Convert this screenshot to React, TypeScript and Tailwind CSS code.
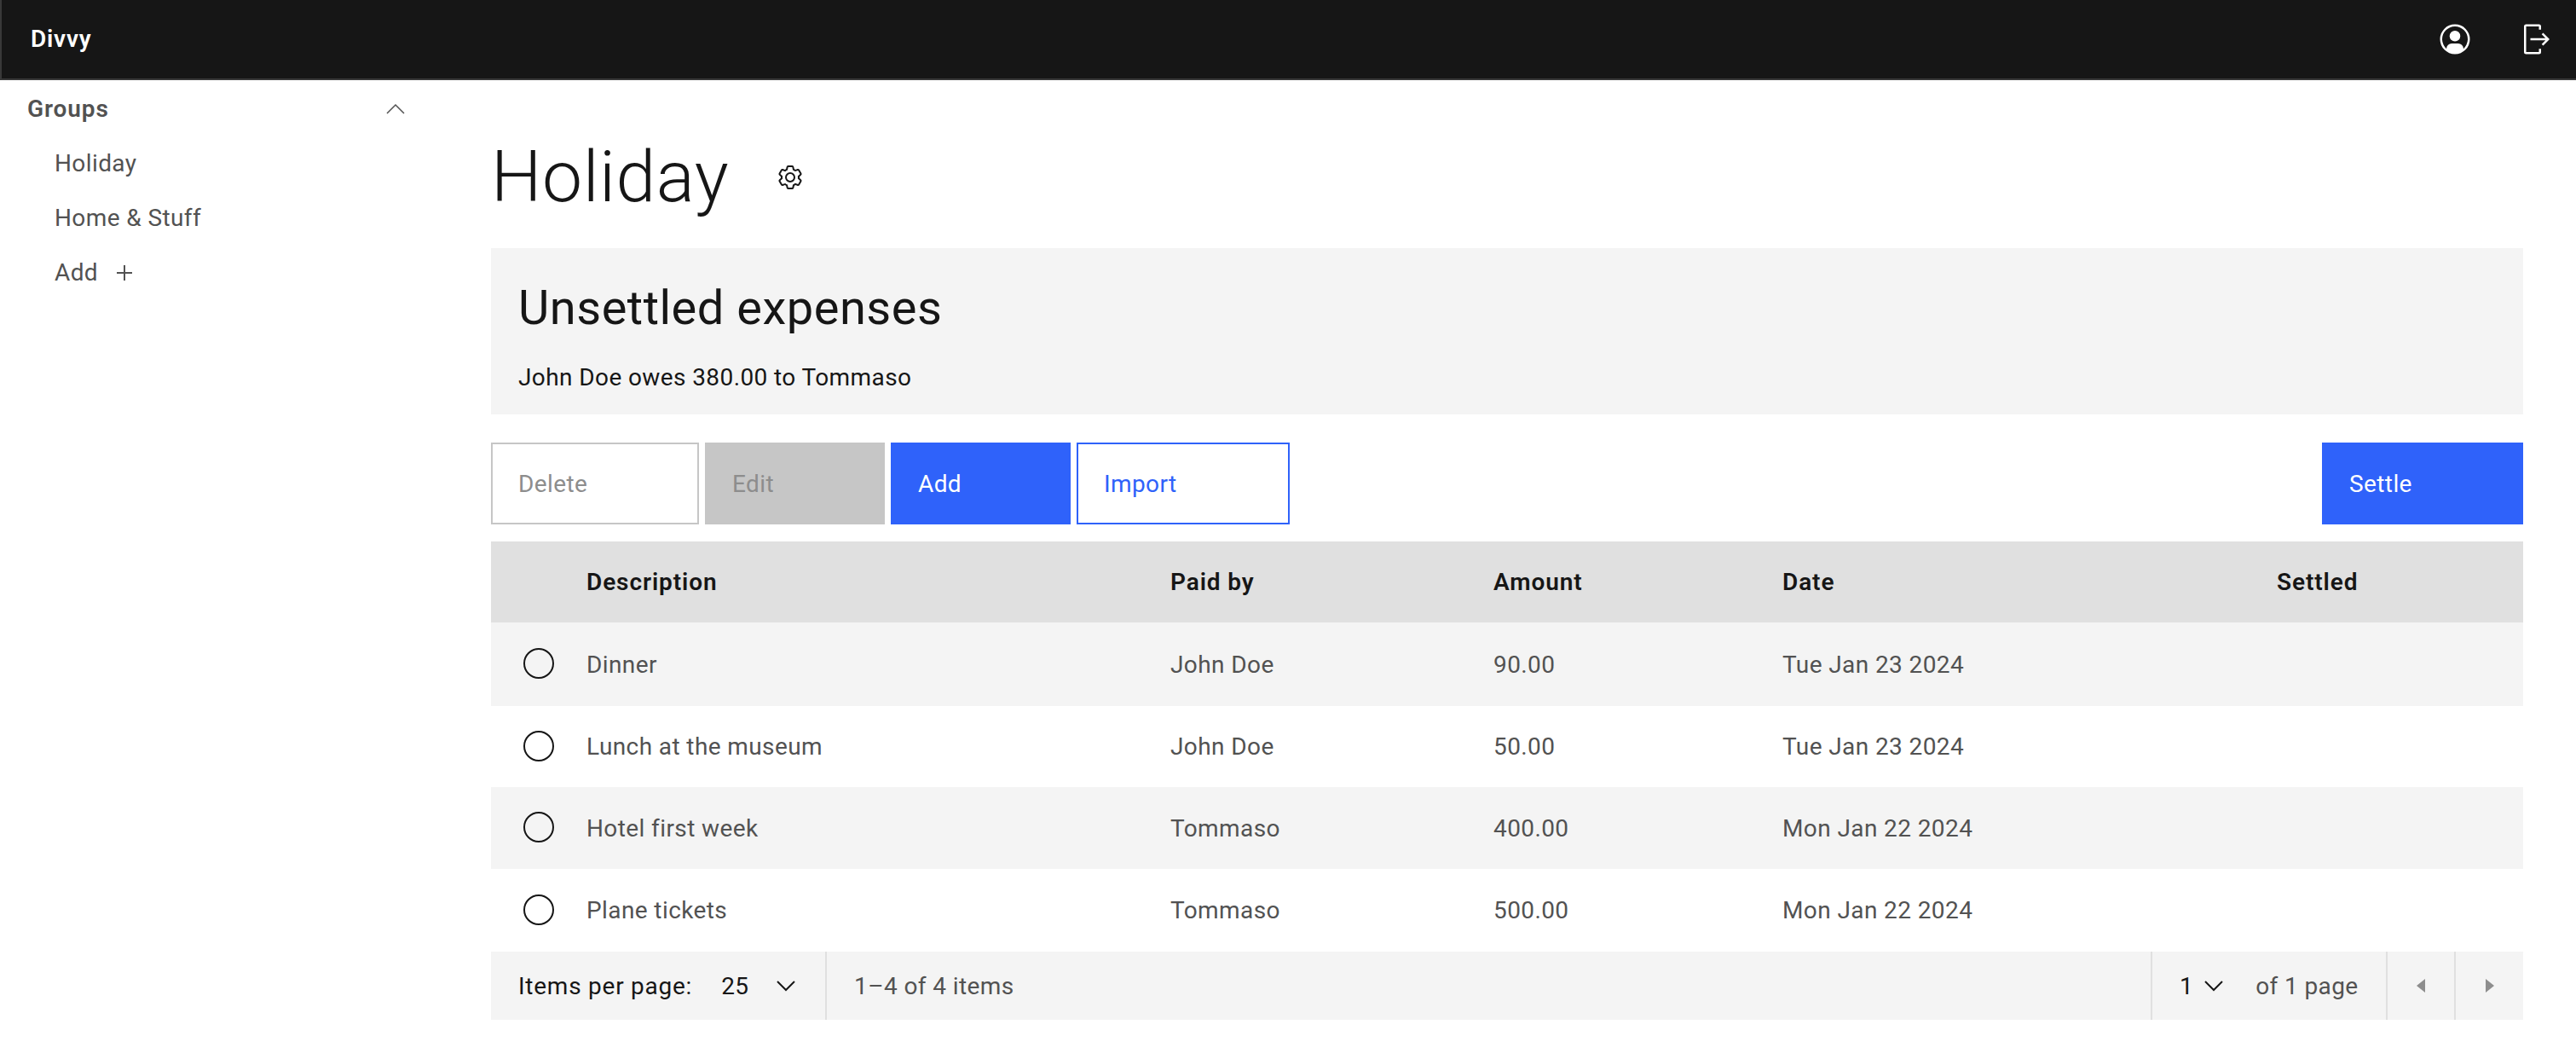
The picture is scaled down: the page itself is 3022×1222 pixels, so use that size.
const expenses = [
  { description: "Dinner", paidBy: "John Doe", amount: "90.00", date: "Tue Jan 23 2024", rowClass: "h-[98px] bg-[#f4f4f4]" },
  { description: "Lunch at the museum", paidBy: "John Doe", amount: "50.00", date: "Tue Jan 23 2024", rowClass: "h-[95px] bg-white" },
  { description: "Hotel first week", paidBy: "Tommaso", amount: "400.00", date: "Mon Jan 22 2024", rowClass: "h-[96px] bg-[#f4f4f4]" },
  { description: "Plane tickets", paidBy: "Tommaso", amount: "500.00", date: "Mon Jan 22 2024", rowClass: "h-[97px] bg-white" },
];

const columns = "grid grid-cols-[113px_684px_379px_339px_580px_1fr] items-center";
const cell = "pt-[1px]";

function UserIcon() {
  return (
    <svg width="40" height="40" viewBox="0 0 32 32" fill="#ffffff">
      <path d="M16 8a5 5 0 1 0 5 5 5 5 0 0 0-5-5z" />
      <path d="M16 2a14 14 0 1 0 14 14A14.016 14.016 0 0 0 16 2zm7.992 22.926A5.002 5.002 0 0 0 19 20h-6a5.002 5.002 0 0 0-4.992 4.926 12 12 0 1 1 15.985 0z" />
    </svg>
  );
}

function LogoutIcon() {
  return (
    <svg width="40" height="40" viewBox="0 0 32 32" fill="#ffffff">
      <path d="M6 30h12a2 2 0 002-2v-3h-2v3H6V4h12v3h2V4a2 2 0 00-2-2H6a2 2 0 00-2 2v24a2 2 0 002 2z" />
      <path d="M20.586 20.586L24.172 17H10v-2h14.172l-3.586-3.586L22 10l6 6-6 6-1.414-1.414z" />
    </svg>
  );
}

function SettingsIcon() {
  return (
    <svg width="32" height="32" viewBox="0 0 32 32" fill="#161616">
      <path d="M27 16.76c0-.25 0-.5 0-.76s0-.51 0-.77l1.92-1.68A2 2 0 0 0 29.3 11L26.94 7a2 2 0 0 0-1.73-1 2 2 0 0 0-.64.1l-2.43.82a11.35 11.35 0 0 0-1.31-.75l-.51-2.52a2 2 0 0 0-2-1.61h-4.68a2 2 0 0 0-2 1.61l-.51 2.52a11.48 11.48 0 0 0-1.32.75l-2.38-.86A2 2 0 0 0 6.79 6a2 2 0 0 0-1.73 1L2.7 11a2 2 0 0 0 .41 2.51L5 15.24c0 .25 0 .5 0 .76s0 .51 0 .77l-1.92 1.68A2 2 0 0 0 2.7 21l2.36 4a2 2 0 0 0 1.73 1 2 2 0 0 0 .64-.1l2.43-.82a11.35 11.35 0 0 0 1.31.75l.51 2.52a2 2 0 0 0 2 1.61h4.72a2 2 0 0 0 2-1.61l.51-2.52a11.48 11.48 0 0 0 1.32-.75l2.42.82a2 2 0 0 0 .64.1 2 2 0 0 0 1.73-1l2.28-4a2 2 0 0 0-.41-2.51ZM25.21 24l-3.43-1.16a8.86 8.86 0 0 1-2.71 1.57L18.36 28h-4.72l-.71-3.55a9.36 9.36 0 0 1-2.7-1.57L6.79 24l-2.36-4 2.72-2.4a8.9 8.9 0 0 1 0-3.13L4.43 12l2.36-4 3.43 1.16a8.86 8.86 0 0 1 2.71-1.57L13.64 4h4.72l.71 3.55a9.36 9.36 0 0 1 2.7 1.57L25.21 8l2.36 4-2.72 2.4a8.9 8.9 0 0 1 0 3.13L27.57 20Z" />
      <path d="M16 22a6 6 0 1 1 6-6 5.94 5.94 0 0 1-6 6Zm0-10a3.91 3.91 0 0 0-4 4 3.91 3.91 0 0 0 4 4 3.91 3.91 0 0 0 4-4 3.91 3.91 0 0 0-4-4Z" />
    </svg>
  );
}

function Chevron({ up = false, color = "#161616" }: { up?: boolean; color?: string }) {
  return (
    <svg width="22" height="13" viewBox="0 0 22 13" fill="none" stroke={color} strokeWidth={up ? 1.5 : 2}>
      <path d={up ? "M1 12 11 2l10 10" : "M1 1l10 10L21 1"} />
    </svg>
  );
}

export default function App() {
  return (
    <div className="h-[1222px] overflow-hidden bg-white font-['Roboto',sans-serif] text-[28px] leading-[36px] tracking-[0.4px] text-[#525252]">
      <header className="flex h-[94px] items-center border-b-2 border-l-2 border-[#393939] bg-[#161616] pr-[26px] pl-[34px]">
        <span className="font-semibold tracking-[0.8px] text-white">Divvy</span>
        <div className="ml-auto flex items-center gap-[56px]">
          <UserIcon />
          <LogoutIcon />
        </div>
      </header>

      <div className="flex">
        <aside className="w-[512px] shrink-0">
          <div className="flex h-[66px] items-center pr-[37px] pl-[32px]">
            <span className="pt-[2px] font-semibold tracking-[0.9px]">Groups</span>
            <span className="ml-auto"><Chevron up color="#525252" /></span>
          </div>
          <nav className="flex flex-col pl-[64px]">
            <a className="flex h-[64px] items-center">Holiday</a>
            <a className="flex h-[64px] items-center">Home &amp; Stuff</a>
            <a className="flex h-[64px] items-center gap-[22px]">
              Add
              <svg width="18" height="18" viewBox="0 0 18 18" stroke="#525252" strokeWidth="2"><path d="M9 0v18M0 9h18" /></svg>
            </a>
          </nav>
        </aside>

        <main className="min-w-0 flex-1 pr-[62px] pl-[64px]">
          <div className="flex h-[197px] items-center pt-[31px]">
            <h1 className="text-[84px] leading-[100px] font-light tracking-[0.55px] text-[#161616]">Holiday</h1>
            <span className="ml-[56px]"><SettingsIcon /></span>
          </div>

          <section className="h-[195px] bg-[#f4f4f4] px-[32px] pt-[34px]">
            <h2 className="text-[56px] leading-[72px] tracking-[0.5px] text-[#161616]">Unsettled expenses</h2>
            <p className="mt-[28px] text-[#161616]">John Doe owes 380.00 to Tommaso</p>
          </section>

          <div className="mt-[33px] flex h-[96px] gap-[7px]">
            <button className="w-[244px] border-2 border-[#c6c6c6] pt-[2px] pl-[30px] text-left text-[#8d8d8d]">Delete</button>
            <button className="w-[211px] bg-[#c6c6c6] pt-[2px] pl-[32px] text-left text-[#8d8d8d]">Edit</button>
            <button className="w-[211px] bg-[#2f62fa] pt-[2px] pl-[32px] text-left text-white">Add</button>
            <button className="w-[250px] border-2 border-[#2f62fa] pt-[2px] pl-[30px] text-left text-[#2f62fa]">Import</button>
            <button className="ml-auto w-[236px] bg-[#2f62fa] pt-[2px] pl-[32px] text-left text-white">Settle</button>
          </div>

          <div className={`${columns} mt-[20px] h-[95px] bg-[#e0e0e0] font-semibold tracking-[0.9px] text-[#161616]`}>
            <span />
            <span className="-ml-[1px]">Description</span>
            <span>Paid by</span>
            <span>Amount</span>
            <span>Date</span>
            <span>Settled</span>
          </div>
          {expenses.map((e) => (
            <div key={e.description} className={`${columns} ${e.rowClass}`}>
              <span className="ml-[38px] h-[36px] w-[36px] -translate-y-[1px] rounded-full border-2 border-[#161616]" />
              <span className={`${cell} -ml-[1px]`}>{e.description}</span>
              <span className={cell}>{e.paidBy}</span>
              <span className={cell}>{e.amount}</span>
              <span className={cell}>{e.date}</span>
              <span />
            </div>
          ))}

          <div className="flex h-[80px] items-stretch bg-[#f4f4f4]">
            <div className="flex w-[394px] items-center border-r-2 border-[#e0e0e0] pl-[32px]">
              <span className="pt-[2px] tracking-[0.75px] text-[#161616]">Items per page:</span>
              <span className="ml-[34px] pt-[2px] text-[#161616]">25</span>
              <span className="ml-[33px]"><Chevron /></span>
            </div>
            <span className="flex items-center pt-[2px] pl-[32px] tracking-[0.4px]">1–4 of 4 items</span>
            <div className="ml-auto flex w-[276px] items-center border-l-2 border-[#e0e0e0] pl-[32px]">
              <span className="pt-[2px] text-[#161616]">1</span>
              <span className="ml-[13px]"><Chevron /></span>
              <span className="ml-[38px] pt-[2px]">of 1 page</span>
            </div>
            <div className="flex w-[80px] items-center justify-center border-l-2 border-[#e0e0e0]">
              <svg width="10" height="16" viewBox="0 0 10 16" fill="#8d8d8d"><path d="M10 0v16L0 8z" /></svg>
            </div>
            <div className="flex w-[81px] items-center justify-center border-l-2 border-[#e0e0e0]">
              <svg width="10" height="16" viewBox="0 0 10 16" fill="#8d8d8d"><path d="M0 0v16l10-8z" /></svg>
            </div>
          </div>
        </main>
      </div>
    </div>
  );
}
